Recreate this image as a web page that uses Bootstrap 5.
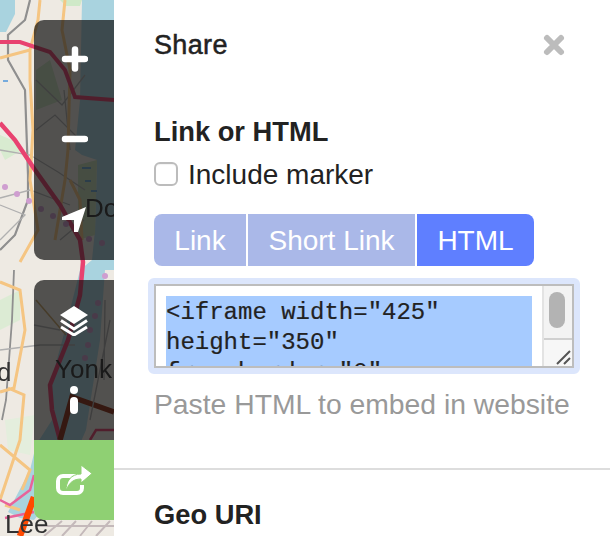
<!DOCTYPE html>
<html lang="en">
<head>
<meta charset="utf-8">
<title>Share</title>
<link rel="stylesheet" href="https://cdn.jsdelivr.net/npm/bootstrap@5.3.0/dist/css/bootstrap.min.css">
<style>
html,body{height:536px;overflow:hidden;background:#fff}
body{font-family:"Liberation Sans",Arial,sans-serif;color:#222}
.map-col{width:114px;height:536px;flex:none;background:#eeeae3;overflow:hidden}
.map-art{position:absolute;left:0;top:0}
.map-label{font-family:"Liberation Sans",Arial,sans-serif;font-size:26px;fill:#333}
.tool-stack{position:relative;margin-left:34px;width:80px;padding-top:20px}
.tool-group{background:rgba(15,15,15,.7);border-radius:10px 0 0 10px}
.tool-group-a{height:240px;margin-bottom:20px}
.tool-group-b{height:160px;border-bottom-left-radius:0}
.tool-btn{height:80px;display:flex;align-items:center;justify-content:center}
.tool-share{height:80px;background:#8fd073;border-radius:0 0 0 10px}
.side-panel{height:536px;overflow:hidden;min-width:0}
.panel-head{height:88px;padding:2px 44px 0 40px}
.panel-title{font-size:27px;font-weight:400;margin:0;-webkit-text-stroke:.5px #222;letter-spacing:.35px}
.panel-sec{padding:23px 30px 0 40px;height:382px;border-bottom:2px solid #ddd}
.sec-title{font-size:27.300px;line-height:42px;font-weight:700;margin:0;color:#222}
.marker-row{height:44px;font-size:28px;gap:10px}
.marker-box{width:24px;height:24px;border:2px solid #bcbcbc;border-radius:6px;flex:none;margin-top:-2px;box-shadow:inset 0 1px 1px rgba(0,0,0,.05)}
.seg-row{margin-top:17px;gap:2px;width:380px;height:52px}
.seg-btn{height:52px;border:0;border-radius:0;padding:1px 0 0;font-size:28px;line-height:52px;color:#fff;background:#aab8e8}
.seg-btn:first-child{width:92px;border-radius:8px 0 0 8px}
.seg-btn:nth-child(2){width:167px}
.seg-btn:last-child{width:117px;border-radius:0 8px 8px 0;background:#5f7fff}
.code-ring{margin:12px 0 0 -6px;width:432px;height:96px;border:6px solid #dce6fc;border-radius:6px}
.code-box{height:84px;border:2px solid #bdbdbd;background:#fff;overflow:hidden}
.code-text{flex:1 1 auto;padding:10px 10px 0 10px;overflow:hidden;min-width:0}
.code-text span{display:block;width:366px;background:#a6cbff;font-family:"Liberation Mono","Courier New",monospace;font-size:24px;line-height:30px;color:#222;white-space:nowrap;height:80px;padding-top:2px;-webkit-text-stroke:.2px #222}
.code-bar{width:30px;flex:none;background:#f3f3f3;border-left:2px solid #e3e3e3;position:relative}
.code-thumb{width:16px;height:36px;border-radius:8px;background:#b3b3b3;margin:6px 0 0 5px}
.code-grip{position:absolute;left:0;right:0;bottom:0;height:28px;border-top:2px solid #d0d0d0;background:#f7f7f7}
.code-grip svg{position:absolute;right:1px;bottom:1px}
.help-text{font-size:28.300px;line-height:30px;color:#999;margin:15px 0 0;white-space:nowrap}
.geo-sec{padding:24px 0 0 40px}
</style>
</head>
<body>
<div class="d-flex">
  <div class="map-col position-relative">
    <svg class="map-art" width="114" height="536" viewBox="0 0 114 536" aria-hidden="true">
      <defs><filter id="soft"><feGaussianBlur stdDeviation=".6"/></filter><filter id="labelsoft"><feGaussianBlur stdDeviation=".4"/></filter></defs>
      <g filter="url(#soft)">
        <path d="M0 0H15V14L6 32H0Z" fill="#a9d3df"/>
        <path d="M82 0H114V270H105L100 340L86 430L60 490L34 520L20 518L8 512L30 470L36 445L52 420L50 385L65 330L80 270L92 260L95 230L97 160L82 155L75 150L80 100Z" fill="#a9d3df"/>
        <path d="M60 0H82L80 6H66Z" fill="#cfe9c8"/>
        <path d="M78 165L97 160L95 235L78 240Z" fill="#c5dcb8"/>
        <path d="M36 70L50 60L62 100L36 110Z" fill="#c9dfbf"/>
        <path d="M0 135L12 140L22 150L5 160L0 150Z" fill="#d8ebd0"/>
        <path d="M0 300L20 290L20 320L0 330Z" fill="#dcebd4"/>
        <path d="M5 420L35 415L30 455L8 450Z" fill="#e4eedd"/>
        <path d="M30 0L25 20L8 35L8 60L25 90L28 175L28 200L15 235L0 250" fill="none" stroke="#8f8f8f" stroke-width="2.2"/>
        <path d="M14 270L12 320L6 400L2 420" fill="none" stroke="#8f8f8f" stroke-width="1.8"/>
        <path d="M0 150L30 155L58 172L85 190M0 198L30 190L70 205M36 80L62 105L85 75M0 350L40 345L75 345M60 240L84 220M36 130L55 115L80 140M0 205L25 215L0 240M60 330L34 325M70 150L64 90" fill="none" stroke="#b0b0b0" stroke-width="1.3"/>
        <path d="M40 0L38 20L30 50L0 58M30 50L30 80L33 130L30 180L38 230L20 262M65 0L62 30L70 70L68 150L65 180L55 240M70 180L80 200L82 240M0 282L20 290L25 330L14 388L0 392M8 388L24 395L20 440L10 470L0 500M0 445L30 470L22 490M5 505L20 510" fill="none" stroke="#f5c582" stroke-width="3"/>
        <path d="M36 300L66 335" fill="none" stroke="#c5a166" stroke-width="1.5"/>
        <path d="M0 42L20 42L50 52L65 70L75 97L114 100" fill="none" stroke="#e8436f" stroke-width="4"/>
        <path d="M0 123L15 140L35 170L60 205L80 240L83 262L80 295L68 340L50 385L52 410L60 440" fill="none" stroke="#e8436f" stroke-width="4.500"/>
        <path d="M34 475L30 490L10 505L0 500M5 518L34 512" fill="none" stroke="#e8639a" stroke-width="2.500"/>
        <g fill="#cf9ed0">
          <circle cx="5" cy="187" r="3"/><circle cx="17" cy="194" r="3"/><circle cx="29" cy="201" r="3"/><circle cx="41" cy="209" r="3"/><circle cx="53" cy="216" r="3"/><circle cx="66" cy="224" r="3"/><circle cx="89" cy="239" r="3"/><circle cx="102" cy="243" r="3"/><circle cx="105" cy="276" r="3"/><circle cx="98" cy="303" r="3"/><circle cx="95" cy="316" r="3"/><circle cx="90" cy="330" r="3"/><circle cx="88" cy="345" r="3"/><circle cx="85" cy="358" r="3"/>
        </g>
        <path d="M82 168h9M85 181h6M91 191h6M3 81h5" stroke="#4f97dc" stroke-width="1.500"/>
        <path d="M60 440L72 397L114 412" fill="none" stroke="#8d2e12" stroke-width="5.500"/>
        <path d="M114 430H96L90 440" fill="none" stroke="#e8436f" stroke-width="2.500"/>
        <path d="M110 320L90 420M105 300L104 380" fill="none" stroke="#aaa" stroke-width="1.300"/>
        <path d="M20 536L34 497" fill="none" stroke="#ff4a00" stroke-width="6.500"/>
        <path d="M44 536L62 521M62 536L76 521M80 536L92 521M96 536L110 521M36 526H114" stroke="#c4b9ba" stroke-width="2"/>
      </g>
      <g filter="url(#labelsoft)">
        <text class="map-label" x="85" y="217">Dob</text>
        <text class="map-label" x="55" y="378">Yonk</text>
        <text class="map-label" x="-3" y="381">d</text>
        <text class="map-label" x="5" y="533">Lee</text>
      </g>
    </svg>
    <div class="tool-stack">
      <div class="tool-group tool-group-a">
        <div class="tool-btn"><svg width="28" height="28" viewBox="0 0 28 28"><path d="M15 3.500V22.500M5 13H25" stroke="#fff" stroke-width="6.500" stroke-linecap="round" fill="none"/></svg></div>
        <div class="tool-btn"><svg width="28" height="28" viewBox="0 0 28 28"><path d="M5 13H25" stroke="#fff" stroke-width="6.500" stroke-linecap="round" fill="none"/></svg></div>
        <div class="tool-btn"><svg width="28" height="28" viewBox="0 0 28 28"><path d="M26 1L18 26H14V14H2V11Z" fill="#fff"/></svg></div>
      </div>
      <div class="tool-group tool-group-b">
        <div class="tool-btn"><svg width="30" height="32" viewBox="0 0 30 32"><path d="M15 2L29 11L15 20L1 11Z" fill="#fff"/><path d="M2 16.500L15 25L28 16.500M2 23L15 31L28 23" fill="none" stroke="#fff" stroke-width="3" stroke-linejoin="round"/></svg></div>
        <div class="tool-btn"><svg width="10" height="32" viewBox="0 0 10 32"><circle cx="5" cy="6" r="4" fill="#fff"/><rect x="1" y="13" width="8" height="17" rx="4" fill="#fff"/></svg></div>
      </div>
      <div class="tool-share tool-btn"><svg width="38" height="32" viewBox="0 0 38 32"><path d="M25 12H8a5 5 0 0 0-5 5V24a5 5 0 0 0 5 5H22a5 5 0 0 0 5-5V21" fill="none" stroke="#fff" stroke-width="4"/><path d="M11 27C11 17 16 10 26 10V1L37 9.500L26 19V15C19 15 14 18 11 27Z" fill="#fff" stroke="#8fd073" stroke-width="1"/></svg></div>
    </div>
  </div>
  <main class="side-panel flex-grow-1">
    <header class="panel-head d-flex align-items-center justify-content-between">
      <h1 class="panel-title">Share</h1>
      <svg width="24" height="24" viewBox="0 0 24 24" aria-label="Close"><path d="M5 5L19 19M19 5L5 19" stroke="#bcbcbc" stroke-width="6" stroke-linecap="round"/></svg>
    </header>
    <section class="panel-sec">
      <h2 class="sec-title">Link or HTML</h2>
      <div class="marker-row d-flex align-items-center"><span class="marker-box"></span><span>Include marker</span></div>
      <div class="seg-row d-flex">
        <button class="btn seg-btn" type="button">Link</button>
        <button class="btn seg-btn" type="button">Short Link</button>
        <button class="btn seg-btn" type="button">HTML</button>
      </div>
      <div class="code-ring">
        <div class="code-box d-flex">
          <div class="code-text"><span>&lt;iframe width="425"<br>height="350"<br>frameborder="0"</span></div>
          <div class="code-bar">
            <div class="code-thumb"></div>
            <div class="code-grip"><svg width="16" height="16" viewBox="0 0 16 16"><path d="M2 15L15 2M9 15L15 9" stroke="#555" stroke-width="2"/></svg></div>
          </div>
        </div>
      </div>
      <p class="help-text">Paste HTML to embed in website</p>
    </section>
    <section class="geo-sec">
      <h2 class="sec-title">Geo URI</h2>
    </section>
  </main>
</div>
<script src="https://cdn.jsdelivr.net/npm/bootstrap@5.3.0/dist/js/bootstrap.bundle.min.js"></script>
</body>
</html>
